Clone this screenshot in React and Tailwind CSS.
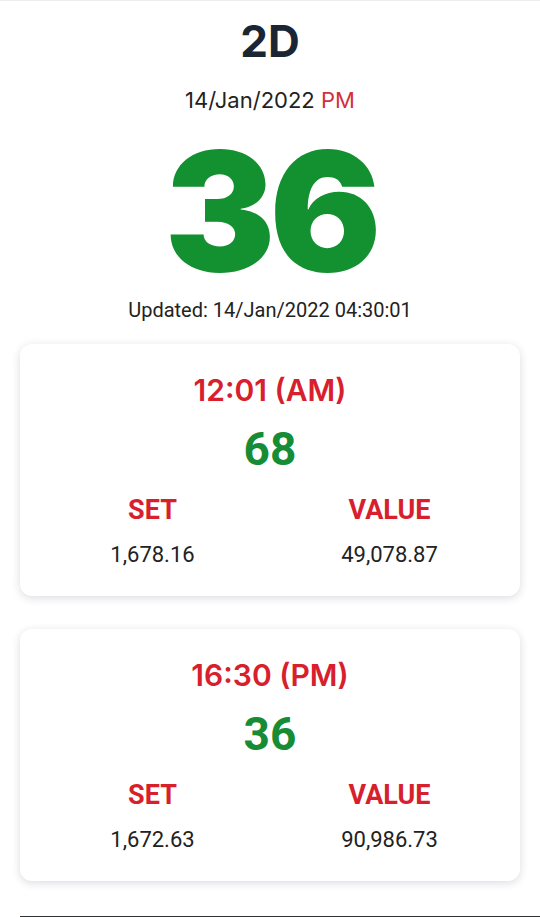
import React from "react";

function Card({ time, num, set, value }) {
  return (
    <div className="w-[500px] rounded-[12px] bg-white shadow-[0_2px_9px_rgba(30,40,70,0.16)] pt-[31px] pb-[30px] flex flex-col items-center">
      <div className="text-[30px] leading-none font-semibold text-[#d8202d] font-['Inter',sans-serif]">{time}</div>
      <div className="mt-[21px] text-[46px] leading-none font-bold text-[#168c34] font-['Roboto',sans-serif]">{num}</div>
      <div className="mt-[25px] w-full grid grid-cols-[237px_237px] pl-[14px] font-['Roboto',sans-serif]">
        <div className="flex flex-col items-center">
          <div className="text-[27px] leading-none font-bold text-[#d8202d]">SET</div>
          <div className="mt-[20px] text-[22px] leading-none text-[#222]">{set}</div>
        </div>
        <div className="flex flex-col items-center">
          <div className="text-[27px] leading-none font-bold text-[#d8202d]">VALUE</div>
          <div className="mt-[20px] text-[22px] leading-none text-[#222]">{value}</div>
        </div>
      </div>
    </div>
  );
}

export default function App() {
  return (
    <div className="h-[917px] overflow-hidden bg-white flex flex-col items-center border-t border-[#eeeeee]">
      <h1 className="pt-[18px] text-[44px] leading-none font-bold text-[#1b2634] font-['Inter',sans-serif]">2D</h1>
      <p className="mt-[26px] text-[22px] leading-none text-[#222] font-['Inter',sans-serif]">
        14/Jan/2022 <span className="text-[#d32f3c]">PM</span>
      </p>
      <div className="mt-[17px] text-[166px] leading-none font-black text-[#13902f] tracking-[-6px] font-['Inter',sans-serif]">36</div>
      <p className="mt-[6px] text-[20px] leading-none text-[#222] font-['Roboto',sans-serif]">
        Updated: 14/Jan/2022 04:30:01
      </p>
      <div className="mt-[24px]">
        <Card time="12:01 (AM)" num="68" set="1,678.16" value="49,078.87" />
      </div>
      <div className="mt-[33px]">
        <Card time="16:30 (PM)" num="36" set="1,672.63" value="90,986.73" />
      </div>
      <div className="mt-[35px] self-end w-[520px] h-[2px] bg-[#2e3134]" />
    </div>
  );
}
